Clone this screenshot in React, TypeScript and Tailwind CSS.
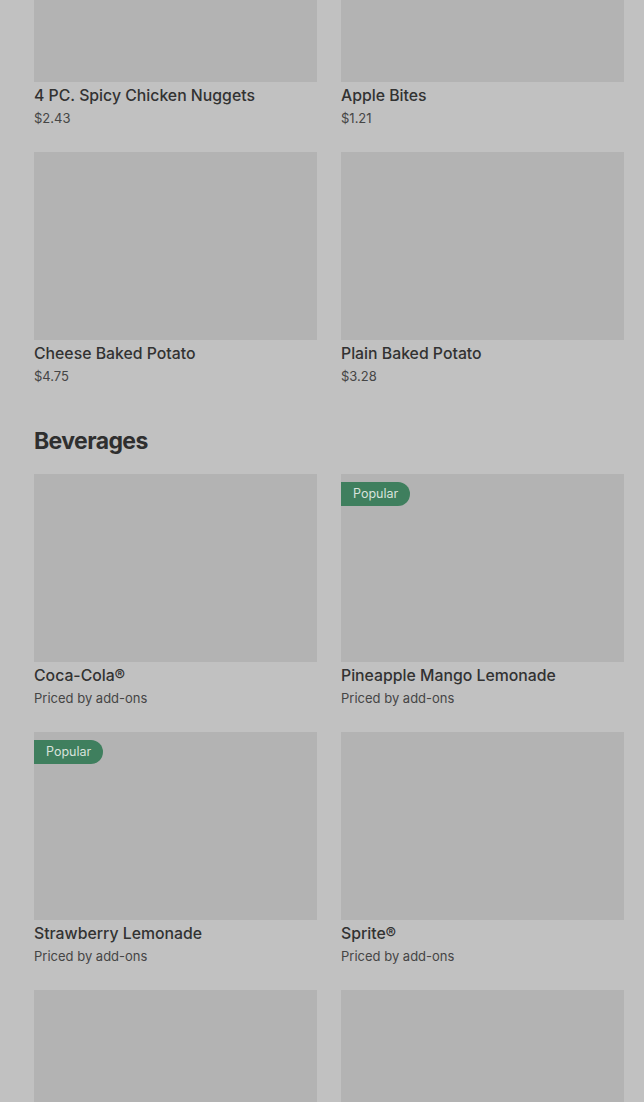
type Item = { name: string; price: string; popular?: boolean }

const sides: Item[] = [
  { name: "4 PC. Spicy Chicken Nuggets", price: "$2.43" },
  { name: "Apple Bites", price: "$1.21" },
  { name: "Cheese Baked Potato", price: "$4.75" },
  { name: "Plain Baked Potato", price: "$3.28" },
]

const beverages: Item[] = [
  { name: "Coca-Cola®", price: "Priced by add-ons" },
  { name: "Pineapple Mango Lemonade", price: "Priced by add-ons", popular: true },
  { name: "Strawberry Lemonade", price: "Priced by add-ons", popular: true },
  { name: "Sprite®", price: "Priced by add-ons" },
]

function Card({ item }: { item?: Item }) {
  return (
    <div className="flex flex-col">
      <div className="relative h-[188px] bg-[#b3b3b3]">
        {item?.popular && (
          <span className="absolute left-0 top-2 flex h-6 items-center rounded-r-full bg-[#3f7f5e] pl-3 pr-3 text-[12.5px] text-[#d8e2dc]">
            Popular
          </span>
        )}
      </div>
      {item && (
        <>
          <div className="mt-[2px] text-[15.8px] font-medium leading-6 text-[#323232]">{item.name}</div>
          <div className="text-[13px] leading-5 text-[#454545]">{item.price}</div>
        </>
      )}
    </div>
  )
}

function Grid({ items, more }: { items: Item[]; more?: boolean }) {
  return (
    <div className="grid grid-cols-2 gap-x-6 gap-y-6">
      {items.map((item) => (
        <Card key={item.name} item={item} />
      ))}
      {more && (
        <>
          <Card />
          <Card />
        </>
      )}
    </div>
  )
}

export default function App() {
  return (
    <div className="h-[1102px] overflow-hidden bg-[#c1c1c1] font-['Inter',sans-serif]">
      <div className="-mt-[106px] pl-[34px] pr-5">
        <Grid items={sides} />
        <h2 className="mt-[39px] mb-[17px] text-[23px] font-bold leading-8 tracking-[-0.6px] text-[#2f2f2f]">
          Beverages
        </h2>
        <Grid items={beverages} more />
      </div>
    </div>
  )
}
